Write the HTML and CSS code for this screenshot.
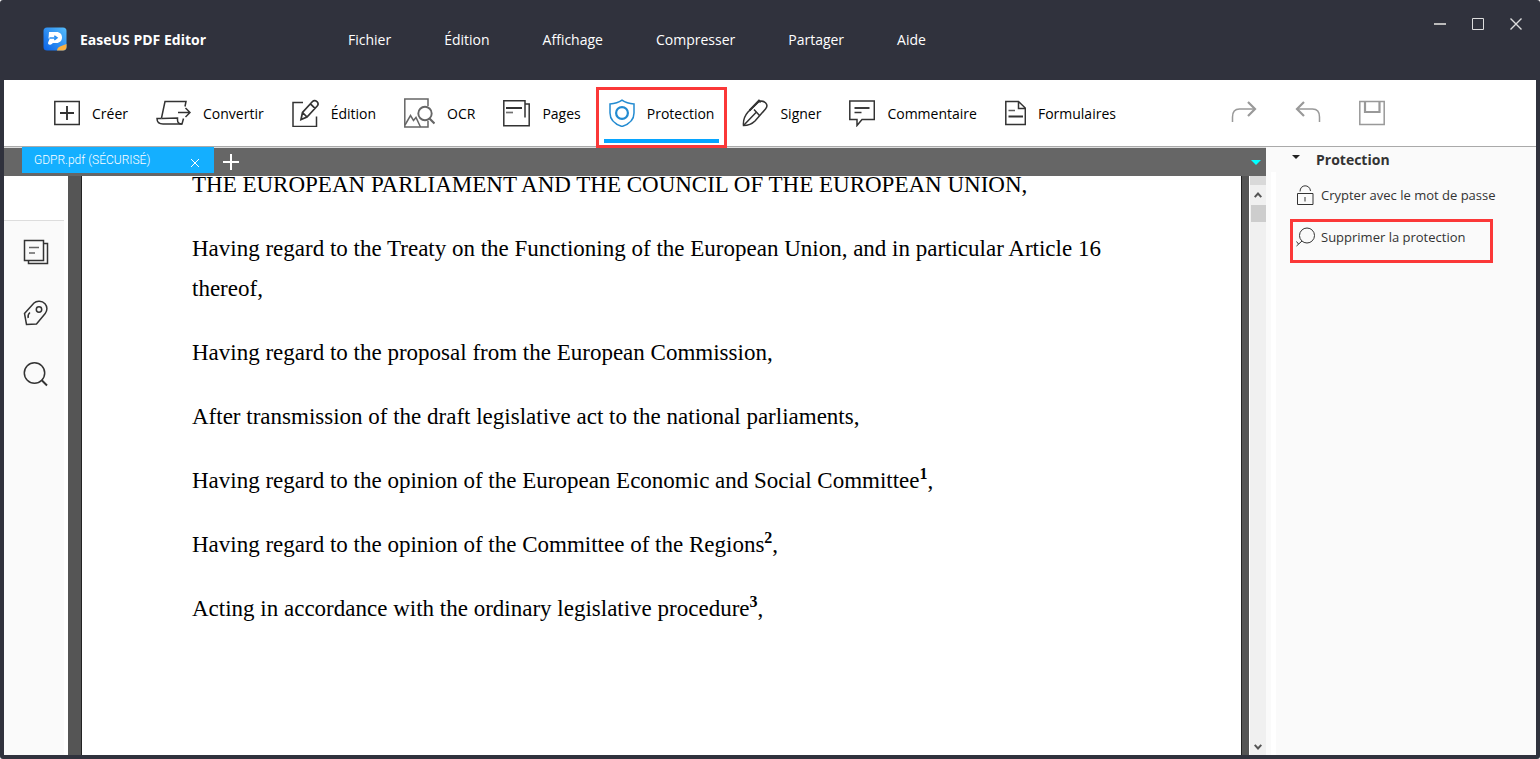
FILE: index.html
```html
<!DOCTYPE html>
<html lang="fr">
<head>
    <meta charset="UTF-8">
    <meta name="viewport" content="width=device-width, initial-scale=1.0">
    <title>EaseUS PDF Editor</title>
    <link rel="stylesheet" href="styles.css">
</head>
<body>

    <div class="window">
        <header class="title-bar">
            <svg class="logo" width="24" height="24" viewBox="0 0 24 24">
                <defs>
                    <linearGradient id="logo-blue" x1="1" y1="0" x2="0" y2="1">
                        <stop offset="0" stop-color="#55bdfb"/>
                        <stop offset="1" stop-color="#0a62e8"/>
                    </linearGradient>
                </defs>
                <rect x="0.5" y="0.5" width="23" height="23" rx="3.5" fill="url(#logo-blue)"/>
                <path d="M6 5h7.500c3.500 0 5.500 2.300 5.500 5.500s-2.400 5.500-5.500 5.500h-3c-1.500 0-1.800 1.800-3.500 1.800S4.600 16.500 5.300 15L6.800 11.500H5.500z" fill="#fff"/>
                <path d="M6.500 11h6M11.300 8.800l2.700 2-2.700 2" fill="none" stroke="#2a8ff2" stroke-width="1.500"/>
                <path d="M14 23.500c.3-2 1.500-3.500 3.500-4.200l6-2.300v3c0 2-1.500 3.500-3.500 3.500z" fill="#fbb040"/>
            </svg>
            <h1>EaseUS PDF Editor</h1>
            <nav class="menu">
                <button>Fichier</button>
                <button>Édition</button>
                <button>Affichage</button>
                <button>Compresser</button>
                <button>Partager</button>
                <button>Aide</button>
            </nav>
            <div class="window-buttons">
                <button aria-label="Réduire">
                    <svg width="14" height="14" viewBox="0 0 14 14"><path d="M1 7h12" stroke-width="2" stroke="#bbb"/></svg>
                </button>
                <button aria-label="Agrandir">
                    <svg width="14" height="14" viewBox="0 0 14 14"><path d="M1.500 1.500h11v11h-11z"/></svg>
                </button>
                <button aria-label="Fermer">
                    <svg width="14" height="14" viewBox="0 0 14 14"><path d="M1.500 1.500l11 11M12.500 1.500l-11 11" stroke-width="1.400"/></svg>
                </button>
            </div>
        </header>

        <div class="toolbar">
            <button class="tool">
                <svg width="26" height="28" viewBox="0 0 26 28"><path d="M.8 2.500h24.500v23H.8z"/><path d="M6 14h14M13 7v14" stroke-width="1.900"/></svg>
                Créer
            </button>
            <button class="tool">
                <svg width="35" height="28" viewBox="0 0 35 28">
                    <path d="M29 7.500L30 2.500H9L5.500 19M27.500 19.500L26 25H7C3 25 1 23 1 19.500h4.500"/>
                    <path d="M5.500 19.500l16-.5v2c0 2.500 1.500 4 4.500 4M22 13.500h12M29.500 9l4.500 4.500-4.500 4.500"/>
                </svg>
                Convertir
            </button>
            <button class="tool">
                <svg width="27" height="28" viewBox="0 0 27 28">
                    <path d="M11 3.500H1v24h23.500V17.500"/>
                    <path d="M9 20.500l1.500-7L20.500 2.500c1.500-1.500 3.500-1 4.500.2 1.200 1.200 1.500 2.800.2 4.300L15 18zM10.500 13.500l4.500 4.500M18.500 4.800l4.500 4.500" stroke-width="1.700"/>
                </svg>
                Édition
            </button>
            <button class="tool">
                <svg class="grey" width="31" height="30" viewBox="0 0 31 30">
                    <path d="M24 8V1H.8v28H24v-6"/>
                    <path d="M1 27l5.500-9.500 3 5 2.500-3 4.500 9.500"/>
                    <circle cx="21" cy="15.500" r="6.700" stroke-width="1.900"/>
                    <path d="M25.500 20.500l5 5" stroke-width="2.200"/>
                </svg>
                OCR
            </button>
            <button class="tool">
                <svg width="27" height="28" viewBox="0 0 27 28">
                    <path d="M22 18.500V1.800H.8v25h25.400V5H22"/>
                    <path d="M3 9h16" stroke-width="2"/><path d="M3 13.500h7" stroke-width="1.700" opacity=".7"/>
                </svg>
                Pages
            </button>
            <button class="tool active">
                <svg class="blue" width="26" height="28" viewBox="0 0 26 28">
                    <path d="M13 1.200c3.500 2.600 7 3.600 12 3.800v9c0 6-4.500 11-12 13.500C5.500 25 1 20 1 14V5c5-.2 8.500-1.200 12-3.800z"/>
                    <circle cx="13" cy="14" r="5.900" stroke-width="2.200"/>
                </svg>
                Protection
            </button>
            <button class="tool">
                <svg width="26" height="28" viewBox="0 0 26 28">
                    <path d="M1.500 26.500c-.5-5 1-9.500 4.500-13.500L16 3.500c2.500-1.800 5.500-1.500 7.500.2 2 2 1.700 4.300 0 6.300L13 22c-3 3-6.500 4.500-11.500 4.500z"/>
                    <path d="M12 10.500l5.500 6M1.500 26.500l12.500-13"/>
                    <path d="M7.500 11.500L17 1.500l2 1.500" stroke-width="2"/>
                </svg>
                Signer
            </button>
            <button class="tool">
                <svg width="26" height="28" viewBox="0 0 26 28">
                    <path d="M.8 2h24.500v18.500H13l-5 6v-6H.8z"/>
                    <path d="M5.500 9h15" stroke-width="1.900"/><path d="M5.500 13.500h7"/>
                </svg>
                Commentaire
            </button>
            <button class="tool">
                <svg width="21" height="28" viewBox="0 0 21 28">
                    <path d="M.8 2.500H13.500L20.300 9v16.500H.8zM13.500 2.500V9.500h6.500"/>
                    <path d="M3.500 11.500H10" opacity=".8"/><path d="M3.500 17.500h14.500" stroke-width="2"/>
                </svg>
                Formulaires
            </button>

            <div class="quick-actions">
                <button aria-label="Rétablir">
                    <svg width="26" height="26" viewBox="0 0 26 26"><path d="M1.500 22v-5c0-5 2.500-8 7-8H24"/><path d="M17 2l7 7-7 7" stroke-width="2.200"/></svg>
                </button>
                <button aria-label="Annuler">
                    <svg width="26" height="26" viewBox="0 0 26 26"><path d="M24.500 22v-5c0-5-2.500-8-7-8H2"/><path d="M9 2L2 9l7 7" stroke-width="2.200"/></svg>
                </button>
                <button aria-label="Enregistrer">
                    <svg width="26" height="26" viewBox="0 0 26 26"><path d="M.8 1.500h24.400v23H.8z"/><path d="M6 1.500v10.500h14.500V1.500" stroke-width="2.200"/></svg>
                </button>
            </div>
        </div>

        <div class="workspace">
            <div class="viewer">
                <div class="tabs">
                    <div class="tab">
                        <span>GDPR.pdf (SÉCURISÉ)</span>
                        <button aria-label="Fermer l'onglet">
                            <svg width="10" height="10" viewBox="0 0 10 10"><path d="M1 1l8 8M9 1L1 9"/></svg>
                        </button>
                    </div>
                    <button class="new-tab" aria-label="Nouvel onglet">
                        <svg width="16" height="16" viewBox="0 0 16 16"><path d="M0 8h16M8 0v16" stroke-width="2"/></svg>
                    </button>
                    <button class="tab-list" aria-label="Liste des onglets">
                        <svg width="10" height="5" viewBox="0 0 10 5"><path d="M0 0h10L5 5z"/></svg>
                    </button>
                </div>

                <div class="content">
                    <aside class="side-bar">
                        <div class="side-head"></div>
                        <div class="side-tools">
                            <button aria-label="Miniatures">
                                <svg width="26" height="26" viewBox="0 0 26 26"><path d="M1.500 1.500h19v20h-19z"/><path d="M20.500 4.500h4v20h-19v-3"/><path d="M6 8.500h10M6 14h6" opacity=".75"/></svg>
                            </button>
                            <button aria-label="Signets">
                                <svg width="26" height="26" viewBox="0 0 26 26"><path d="M1.500 13.500L11 3c2.500-2.400 8-2.400 11 .7 2.500 2.800 2.500 7 .2 9.800L13.500 24l-10 .5z"/><circle cx="16" cy="9.500" r="2.700"/><path d="M7 12.500c-2 1.500-2.300 3-1.800 5.500"/></svg>
                            </button>
                            <button aria-label="Rechercher">
                                <svg width="26" height="26" viewBox="0 0 26 26"><circle cx="11.500" cy="12" r="10.200"/><path d="M18.500 19l5.500 5.500" stroke-width="1.900"/></svg>
                            </button>
                        </div>
                    </aside>

                    <main class="page">
                        <div class="page-text">
                            <p>THE EUROPEAN PARLIAMENT AND THE COUNCIL OF THE EUROPEAN UNION,</p>
                            <p>Having regard to the Treaty on the Functioning of the European Union, and in particular Article 16 thereof,</p>
                            <p>Having regard to the proposal from the European Commission,</p>
                            <p>After transmission of the draft legislative act to the national parliaments,</p>
                            <p>Having regard to the opinion of the European Economic and Social Committee<sup>1</sup>,</p>
                            <p>Having regard to the opinion of the Committee of the Regions<sup>2</sup>,</p>
                            <p>Acting in accordance with the ordinary legislative procedure<sup>3</sup>,</p>
                        </div>
                    </main>

                    <div class="scrollbar">
                        <div class="scroll-top"></div>
                        <button aria-label="Défiler vers le haut">
                            <svg width="8" height="6" viewBox="0 0 8 6"><path d="M.7 5.200L4 1.500l3.300 3.700"/></svg>
                        </button>
                        <div class="thumb"></div>
                        <button class="down" aria-label="Défiler vers le bas">
                            <svg width="8" height="6" viewBox="0 0 8 6"><path d="M.7.8L4 4.500 7.300.8"/></svg>
                        </button>
                    </div>
                </div>
            </div>

            <aside class="panel">
                <h2>
                    <svg width="8" height="4" viewBox="0 0 8 4"><path d="M0 0h8L4 4z"/></svg>
                    Protection
                </h2>
                <button class="action">
                    <svg width="20" height="22" viewBox="0 0 20 22"><path d="M2.500 9.500h15.500v11H2.500z"/><path d="M5 7.500C5 0 15 0 15.500 7"/><path d="M10 13v4.500"/></svg>
                    Crypter avec le mot de passe
                </button>
                <button class="action highlighted">
                    <svg width="20" height="22" viewBox="0 0 20 22"><circle cx="12" cy="9.500" r="7.500"/><path d="M7 15l-5.500 5M1.500 15.500l2 2.500"/></svg>
                    Supprimer la protection
                </button>
            </aside>
        </div>
    </div>

</body>
</html>
```

FILE: styles.css
```css
* {
    box-sizing: border-box;
}

body {
    margin: 0;
    background-color: #fff;
    color: #000;
    font-family: "Open Sans", "Noto Sans", sans-serif;
    font-size: 14px;
}

button {
    padding: 0;
    border: 0;
    background: none;
    color: inherit;
    font: inherit;
    cursor: pointer;
}

svg {
    display: block;
    flex: none;
    fill: none;
    stroke: #333;
    stroke-width: 1.5;
}

.window {
    display: flex;
    flex-direction: column;
    height: 100vh;
    padding: 0 4px 4px;
    background-color: #30323d;
    border-radius: 3px;
    overflow: hidden;
}

/* title bar */
.title-bar {
    display: flex;
    align-items: center;
    flex: none;
    height: 80px;
    padding: 0 0 2px 39px;
    color: #fff;
}

.logo {
    stroke: none;
}

.title-bar h1 {
    width: 268px;
    margin: 0 0 0 13px;
    font-size: 14px;
    font-weight: bold;
}

.menu {
    display: flex;
    gap: 53px;
}

.window-buttons {
    display: flex;
    align-self: flex-start;
    gap: 24px;
    margin-left: auto;
    padding: 17px 13px 0 0;
}

.window-buttons svg {
    stroke: #ddd;
    stroke-width: 1;
}

/* toolbar */
.toolbar {
    display: flex;
    flex: none;
    gap: 28px;
    height: 67px;
    padding: 0 151px 0 50px;
    background-color: #fff;
    border-bottom: 1px solid #aaa;
}

.tool {
    display: flex;
    align-items: center;
    gap: 12px;
    position: relative;
}

.grey {
    stroke: #666;
}

.blue {
    stroke: #238bd1;
}

.tool.active::before {
    content: "";
    position: absolute;
    inset: 59px -5px 3px;
    background-color: #06a5ff;
}

.tool.active::after {
    content: "";
    position: absolute;
    inset: 7px -13px -2px;
    border: 3px solid #fb3838;
    z-index: 1;
}

.quick-actions {
    display: flex;
    align-items: center;
    gap: 38px;
    margin-left: auto;
}

.quick-actions svg {
    stroke: #999;
}

/* workspace */
.workspace {
    display: flex;
    flex: 1;
    min-height: 0;
    background-color: #fafafa;
}

.viewer {
    display: flex;
    flex-direction: column;
    flex: 1;
    min-width: 0;
}

.tabs {
    display: flex;
    flex: none;
    height: 29px;
    padding: 0 5px 0 18px;
    background-color: #666;
    border-top: 1px solid #ddd;
}

.tab {
    display: flex;
    justify-content: space-between;
    width: 192px;
    height: 26px;
    margin-top: -1px;
    padding: 0 14px 0 12px;
    background-color: #14afff;
    color: #fff;
    font: 300 12px/26px Roboto, sans-serif;
}

.tab svg {
    margin-top: 5px;
    stroke: #fff;
    stroke-width: 1;
}

.new-tab {
    margin-left: 9px;
}

.new-tab svg {
    stroke: #fff;
}

.tab-list {
    margin-left: auto;
}

.tab-list svg {
    fill: #00ffff;
    stroke: none;
}

.content {
    display: flex;
    flex: 1;
    min-height: 0;
    background-color: #555;
}

.side-bar {
    width: 64px;
    background-color: #fafafa;
    border-right: 4px solid #fff;
}

.side-head {
    height: 45px;
    background-color: #fff;
    border-bottom: 1px solid #ddd;
}

.side-tools {
    display: flex;
    flex-direction: column;
    align-items: center;
    gap: 35px;
    padding: 18px 0 0 4px;
}

.page {
    flex: 1;
    margin: 0 7px 0 13px;
    padding: 0 110px;
    overflow: hidden;
    background-color: #fff;
    border: solid #222;
    border-width: 0 1px;
}

/* scrolled down, so the first line is cut */
.page-text {
    margin-top: -11px;
    font: 23px/40px "Liberation Serif", "Times New Roman", serif;
}

.page-text p {
    margin: 0 0 24px;
}

.page-text sup {
    font-size: 16px;
    font-weight: bold;
    line-height: 0;
}

.scrollbar {
    display: flex;
    flex-direction: column;
    align-items: center;
    width: 17px;
    background-color: #f0f0f0;
    border-left: 1px solid #fff;
}

.scroll-top {
    width: 100%;
    height: 9px;
    background-color: #d9d9d9;
}

.scrollbar button {
    height: 20px;
}

.scrollbar svg {
    stroke: #555;
    stroke-width: 2;
}

.thumb {
    width: 15px;
    height: 17px;
    background-color: #cdcdcd;
}

.scrollbar .down {
    height: 16px;
    margin-top: auto;
}

/* right panel */
.panel {
    width: 270px;
    padding: 0 0 0 25px;
    background: linear-gradient(#fff, #fff) 5px 25px / 5px 100% no-repeat #fafafa;
    color: #333;
}

.panel h2 {
    display: flex;
    align-items: center;
    gap: 16px;
    height: 24px;
    margin: 0 0 3px 1px;
    font-size: 14px;
}

.panel h2 svg {
    margin-bottom: 4px;
    fill: #222;
    stroke: none;
}

.action {
    display: flex;
    align-items: center;
    gap: 6px;
    height: 42px;
    padding-left: 4px;
    font-size: 13px;
    white-space: nowrap;
    position: relative;
}

.action svg {
    stroke-width: 1;
}

.highlighted::after {
    content: "";
    position: absolute;
    inset: 3px -28px -5px -1px;
    border: 3px solid #fb3838;
}
```
